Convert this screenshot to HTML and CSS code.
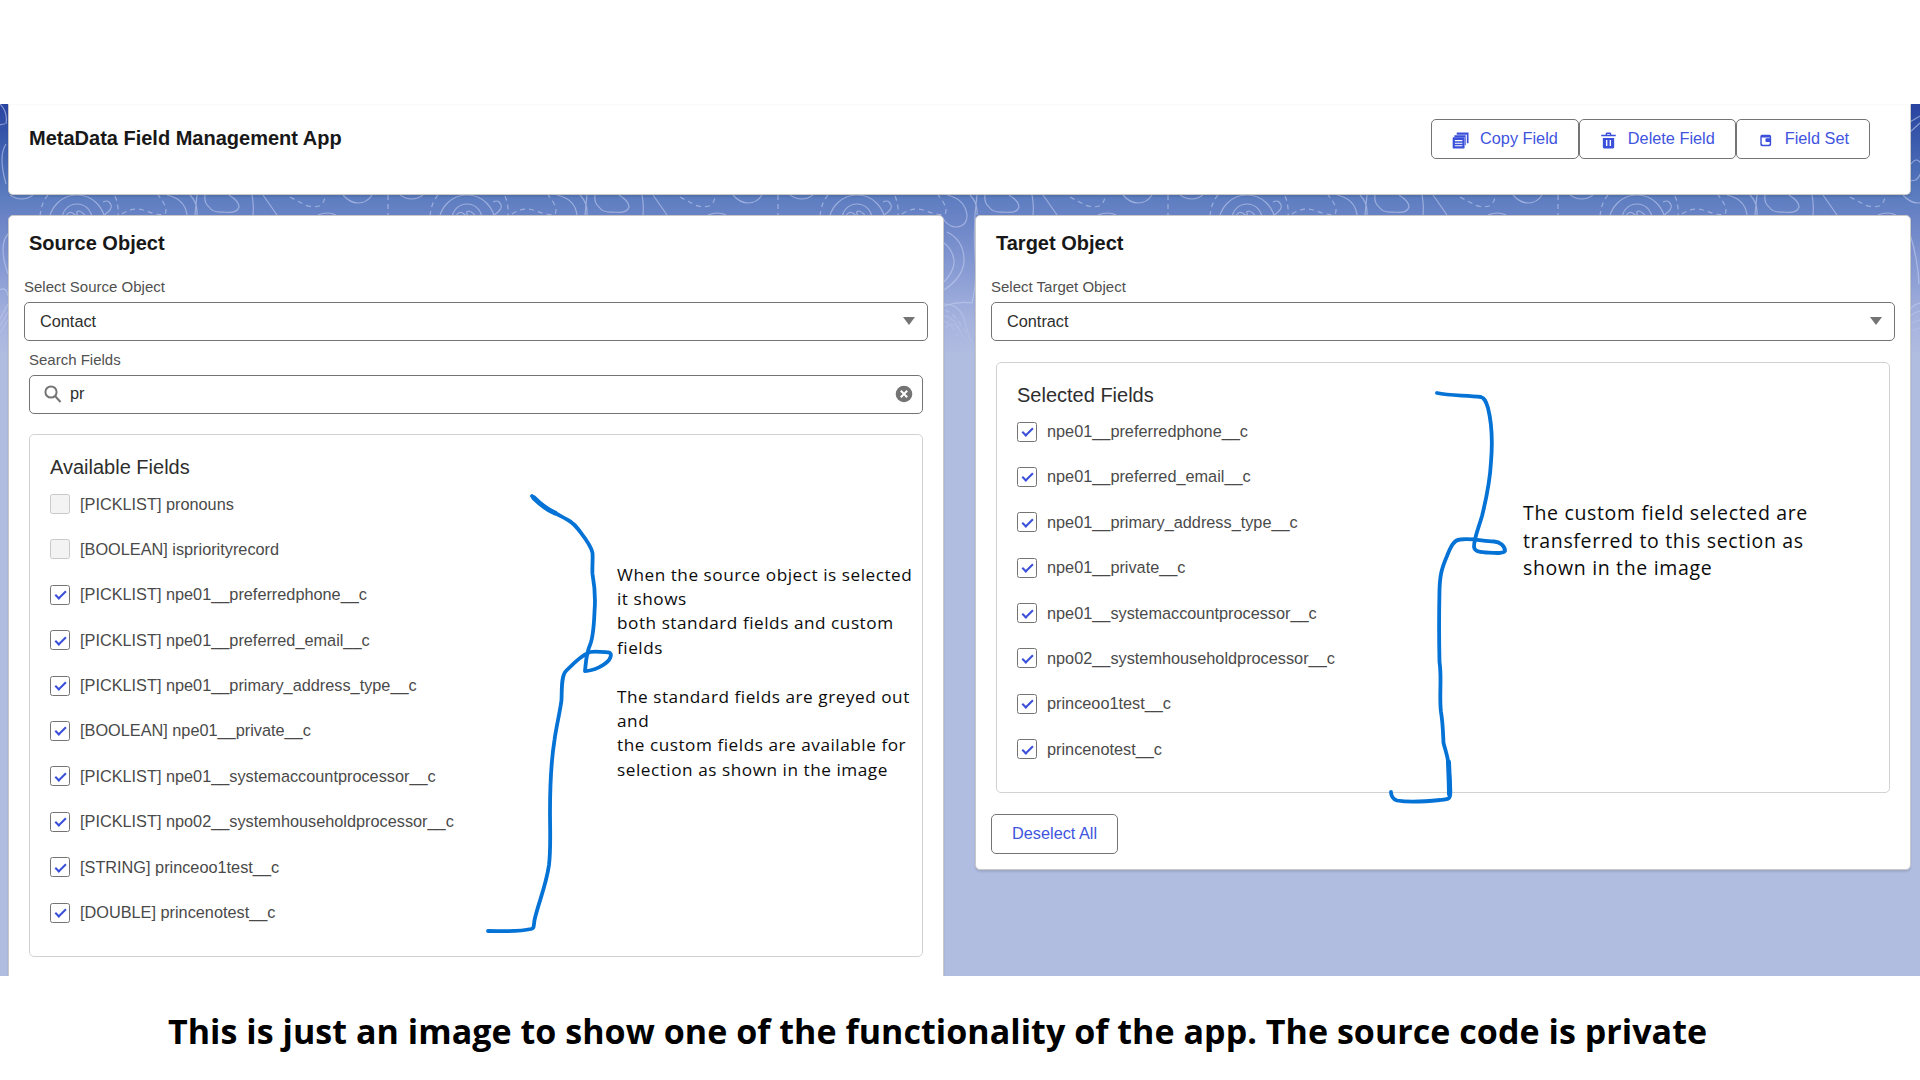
FILE: index.html
```html
<!DOCTYPE html>
<html lang="en">
<head>
<meta charset="utf-8">
<title>MetaData Field Management App</title>
<link rel="stylesheet" href="styles.css">
</head>
<body>
<main class="app">
  <svg class="contours" width="1920" height="250" aria-hidden="true">
    <defs>
      <linearGradient id="fade" x1="0" y1="0" x2="0" y2="1"><stop offset="0.8" stop-color="#fff"/><stop offset="1" stop-color="#fff" stop-opacity="0"/></linearGradient>
      <mask id="fadeMask"><rect width="1920" height="250" fill="url(#fade)"/></mask>
      <pattern id="topo" width="390" height="250" patternUnits="userSpaceOnUse">
        <g fill="none" stroke="#c4cef0" stroke-width="1.2">
          <circle cx="77" cy="119" r="28"/><circle cx="77" cy="115" r="15"/>
          <path d="M66 112q3-6 8-2l6 5q-6-8-1-8 4 1 9 8M103 98q4-2 6 0 5 5-1 10l-5 4M167 91q18 4 20 20 0 12-12 12-8-1-13-10M190 91q8 8 7 20M205 91q-1 8 4 12 4 6 14 5 14 2 16-5 0-6-10-12M252 91q2 10 1 20M263 91l14 20M343 91q7 8 15 8 9 0 14-8M10 91q12 8 23 0M318 111q10-4 18 0M197 91q-4 30-2 60t-3 48q-14-2-28 3M167 128q16 8 17 26t-20 32M163 138q10 8 11 18t-10 22M163 200q18 0 22 18t14 32M164 212q9 0 17 16M165 224q8-8 14 2t14 18M0 0q8 8 6 20M6 40q-8 12 0 40M8 130q-10 12 0 40M0 186q6-4 8 6M0 215l8-15M0 222l8-14M0 229l8-13M350 18l10-6M350 28l10-9M351 60q6-8 10 0 3 8-5 16l-6 1M350 130q8 26 9 50M350 205q5-5 10-6M350 212q5-4 10-5M350 220q5-3 10-4M350 228q5-3 10-4"/>
          <path stroke-dasharray="5 4" d="M48 91q-7 8-8 22M115 92q4 9 3 22M122 110q12-8 24-3 14 5 19 3 4-6-7-19M290 93l15 8q8 3 14 1 6-3 6-11M388 91v20M165 206q12 4 26 32M164 217q10 4 18 24M0 21q4-2 8 0"/>
        </g>
      </pattern>
    </defs>
    <rect width="1920" height="250" fill="url(#topo)" mask="url(#fadeMask)"/>
  </svg>

  <header class="card app-header">
    <h1 class="card-title">MetaData Field Management App</h1>
    <div class="button-group">
      <button class="button"><svg class="button-icon" width="17" height="17" viewBox="0 0 18 18"><path d="M5 .5h12.500v11.500h-1.800V3H5zM2.500 3.500h12v10.500h-1V5.500h-11z"/><path fill-rule="evenodd" d="M1.500 5.500h11q.8 0 .8.8v10.500q0 .8-.8.8h-11q-.8 0-.8-.8V6.300q0-.8.8-.8zM3 8.500v1.200h8V8.500zM3 11.300v1.200h8v-1.200zM3 14v1.200h8V14z"/></svg>Copy Field</button>
      <button class="button"><svg class="button-icon" width="17" height="17" viewBox="0 0 18 18"><path fill-rule="evenodd" d="M6 2.800V2Q6 .5 7.500.5h3Q12 .5 12 2v.8h4.700v1.800H1.300V2.800zM7.500 2.800h3V2h-3zM3 6.300h12v9.500q0 1.800-1.800 1.800H4.800Q3 17.600 3 15.800zM6.300 8.500v6.400h1.500V8.500zM10.200 8.500v6.400h1.500V8.500z"/></svg>Delete Field</button>
      <button class="button"><svg class="button-icon" width="17" height="17" viewBox="0 0 18 18"><path fill-rule="evenodd" d="M5.500 3h7.500q2 0 2 2v8q0 2-2 2h-7.500q-2 0-2-2V5q0-2 2-2zM5 5.700v6.300q0 1.500 1.300 1.500h5.900q1.300 0 1.300-1.500v-1.300H9.800q-.8 0-.8-.8V7.500q0-.8.8-.8h3.700v-1z"/></svg>Field Set</button>
    </div>
  </header>

  <div class="columns">
    <section class="card source">
      <h2 class="card-title">Source Object</h2>
      <div class="field">
        <label class="label">Select Source Object</label>
        <div class="control">Contact<i class="caret"></i></div>
      </div>
      <div class="field inset">
        <label class="label">Search Fields</label>
        <div class="control search">
          <svg width="18" height="18" viewBox="0 0 18 18" fill="none" stroke="#747474" stroke-width="2"><circle cx="7" cy="7" r="5.600"/><path d="M11 11l5.500 6"/></svg>
          <span>pr</span>
          <svg class="clear" width="18" height="18" viewBox="0 0 18 18"><circle cx="9" cy="9" r="8.300" fill="#747474"/><path d="M5.800 5.800l6.400 6.400M12.200 5.800l-6.400 6.400" stroke="#fff" stroke-width="2"/></svg>
        </div>
      </div>
      <div class="field-box inset">
        <h3 class="box-title">Available Fields</h3>
        <ul class="checks">
          <li><i class="box off"></i>[PICKLIST] pronouns</li>
          <li><i class="box off"></i>[BOOLEAN] ispriorityrecord</li>
          <li><i class="box"></i>[PICKLIST] npe01__preferredphone__c</li>
          <li><i class="box"></i>[PICKLIST] npe01__preferred_email__c</li>
          <li><i class="box"></i>[PICKLIST] npe01__primary_address_type__c</li>
          <li><i class="box"></i>[BOOLEAN] npe01__private__c</li>
          <li><i class="box"></i>[PICKLIST] npe01__systemaccountprocessor__c</li>
          <li><i class="box"></i>[PICKLIST] npo02__systemhouseholdprocessor__c</li>
          <li><i class="box"></i>[STRING] princeoo1test__c</li>
          <li><i class="box"></i>[DOUBLE] princenotest__c</li>
        </ul>
      </div>
    </section>

    <section class="card target">
      <h2 class="card-title">Target Object</h2>
      <div class="field">
        <label class="label">Select Target Object</label>
        <div class="control">Contract<i class="caret"></i></div>
      </div>
      <div class="field-box inset">
        <h3 class="box-title">Selected Fields</h3>
        <ul class="checks">
          <li><i class="box"></i>npe01__preferredphone__c</li>
          <li><i class="box"></i>npe01__preferred_email__c</li>
          <li><i class="box"></i>npe01__primary_address_type__c</li>
          <li><i class="box"></i>npe01__private__c</li>
          <li><i class="box"></i>npe01__systemaccountprocessor__c</li>
          <li><i class="box"></i>npo02__systemhouseholdprocessor__c</li>
          <li><i class="box"></i>princeoo1test__c</li>
          <li><i class="box"></i>princenotest__c</li>
        </ul>
      </div>
      <button class="button deselect">Deselect All</button>
    </section>
  </div>
</main>

<svg class="ink" width="1920" height="1080" viewBox="0 0 1920 1080" aria-hidden="true">
  <path d="M532 496C540 504 548 510 556 513.500C566 519 572 521 578 529C584 537 591 545 592.500 553C593 560 592 568 592.500 574C595 588 595.500 600 594.500 612C594 624 593 638 590 645C586 654 586 662 585 671C594 671 605 665 609 660C612 656 611 653 609 652.500C603 652 596 651 590 652C580 656 572 665 566 671C561 676 562 690 561.500 700C560 712 556 728 554.500 740C551 762 550 790 550 812C550 830 551 848 549 865C546 886 538 904 534.500 920C533.500 928 534 928 531 929C518 932 504 931 488 931"/>
  <path class="swell" d="M534 498C541 505 548 510 555 513"/>
  <path d="M1437 393C1450 396 1466 395 1481 397C1485 398 1486 402 1488 408C1492 424 1492.500 444 1491 462C1490 480 1486 500 1482 516C1478 530 1474 538 1474 547C1475 552 1480 552 1486 552.500C1494 553 1503 554 1505 551C1505 546 1500 542 1494 541.500C1482 541 1472 538 1460 539.500C1454 540 1451 546 1447 556C1441 570 1440 576 1439.500 590C1439 612 1439 640 1439.500 662C1442 678 1439 696 1441 712C1443 724 1443 734 1443.500 743C1446 753 1449 758 1449 772C1450 782 1451 792 1450 796C1449 800 1446 799 1440 800C1426 801.500 1408 802.500 1397 800.500C1393 799 1391 796 1391 792"/>
  <path class="swell" d="M1448.500 762C1449 774 1449.500 784 1449.500 794"/>
</svg>

<p class="note note-source">When the source object is selected<br>it shows<br>both standard fields and custom<br>fields<br><br>The standard fields are greyed out<br>and<br>the custom fields are available for<br>selection as shown in the image</p>
<p class="note note-target">The custom field selected are<br>transferred to this section as<br>shown in the image</p>

<footer class="caption">This is just an image to show one of the functionality of the app. The source code is private</footer>
</body>
</html>
```
FILE: styles.css
```css
* { box-sizing: border-box; }

body {
  margin: 0;
  padding-top: 104px;
  position: relative;
  width: 1920px;
  height: 1080px;
  overflow: hidden;
  background: #fff;
  font-family: "Liberation Sans", Arial, sans-serif;
  font-size: 16.3px;
  color: #2e2e2e;
}

h1, h2, h3, p, ul { margin: 0; padding: 0; }

.app {
  position: relative;
  height: 872px;
  padding: 0 8px;
  overflow: hidden;
  background: linear-gradient(#2843a0 0, #3656aa 30px, #5a7cbf 90px, #6b84c6 115px, #8498d2 160px, #a5b2dd 215px, #b0bce0 250px);
}

.contours { position: absolute; left: 0; top: 0; opacity: .6; }

.card {
  position: relative;
  background: #fff;
  border: 1px solid #c9c9c9;
  border-radius: 5px;
  box-shadow: 0 2px 2px rgba(0, 0, 0, .1);
}

.card-title { font-size: 20px; line-height: 24px; font-weight: 700; color: #181818; }

.app-header {
  display: flex;
  justify-content: space-between;
  align-items: flex-start;
  width: 1903px;
  height: 91px;
  padding: 14px 40px 0 20px;
  border-top: 1px solid #fafafa;
  border-radius: 0 0 5px 5px;
}
.app-header .card-title { padding-top: 7px; }

.button-group { display: flex; }

.button {
  display: flex;
  align-items: center;
  height: 40px;
  padding: 0 20px;
  border: 1px solid #747474;
  border-radius: 5px;
  background: #fff;
  color: #4054de;
  font: inherit;
}
.button-group .button { padding-bottom: 2px; }
.button-icon { fill: #3a4fda; margin: 4px 11px 0 0; }

.columns {
  display: grid;
  grid-template-columns: 936px 936px;
  gap: 31px;
  align-items: start;
  margin-top: 20px;
}

.columns .card { padding: 15px 15px 15px; }
.source { height: 800px; }
.columns .card-title { padding-left: 5px; margin-bottom: 22px; }

.inset { margin-left: 5px; margin-right: 5px; }
.field + .field { margin-top: 8.500px; }
.label { display: block; font-size: 15px; line-height: 20px; color: #505050; margin-bottom: 5px; }

.control {
  display: flex;
  align-items: center;
  height: 39px;
  padding: 0 12px 1px 15px;
  border: 1px solid #747474;
  border-radius: 5px;
}
.caret { margin-left: auto; border: 6.500px solid transparent; border-top: 8px solid #747474; border-bottom: 0; }
.search { padding: 0 9px 1px 14px; gap: 8px; }
.clear { margin-left: auto; }

.field-box {
  margin-top: 20.500px;
  padding: 20px 20px 33px;
  border: 1px solid #d2d2d2;
  border-radius: 5px;
}
.box-title { font-size: 20px; line-height: 24px; font-weight: 400; margin-bottom: 15px; }

.checks { display: flex; flex-direction: column; gap: 25.400px; list-style: none; color: #4a4a4a; }
.checks li { display: flex; align-items: center; gap: 10px; height: 20px; }

.box { position: relative; width: 20px; height: 20px; border: 1px solid #747474; border-radius: 2.500px; }
.box::after {
  content: "";
  box-sizing: border-box;
  position: absolute;
  left: 3.750px;
  top: 5.500px;
  width: 10.500px;
  height: 5.500px;
  border-left: 2.600px solid #3a4fda;
  border-bottom: 2.600px solid #3a4fda;
  transform: rotate(-45deg);
}
.box.off { border-color: #c9c9c9; background: #f3f3f3; }
.box.off::after { display: none; }

.deselect { margin-top: 20.500px; }

.ink { position: absolute; left: 0; top: 0; fill: none; stroke: #0572d6; stroke-width: 3.800; stroke-linecap: round; stroke-linejoin: round; }
.swell { stroke-width: 5; }

.note { position: absolute; white-space: nowrap; color: #0c0c0c; font-family: "Open Sans", sans-serif; }
.note-source { left: 617px; top: 562.500px; font-size: 17.200px; line-height: 24.400px; letter-spacing: .53px; }
.note-target { left: 1523px; top: 499px; font-size: 19.500px; line-height: 27.500px; letter-spacing: .67px; }

.caption {
  padding: 32px 0 0 168px;
  color: #000;
  font: 700 34px/46px "Open Sans", sans-serif;
  letter-spacing: .040px;
  white-space: nowrap;
}
```
